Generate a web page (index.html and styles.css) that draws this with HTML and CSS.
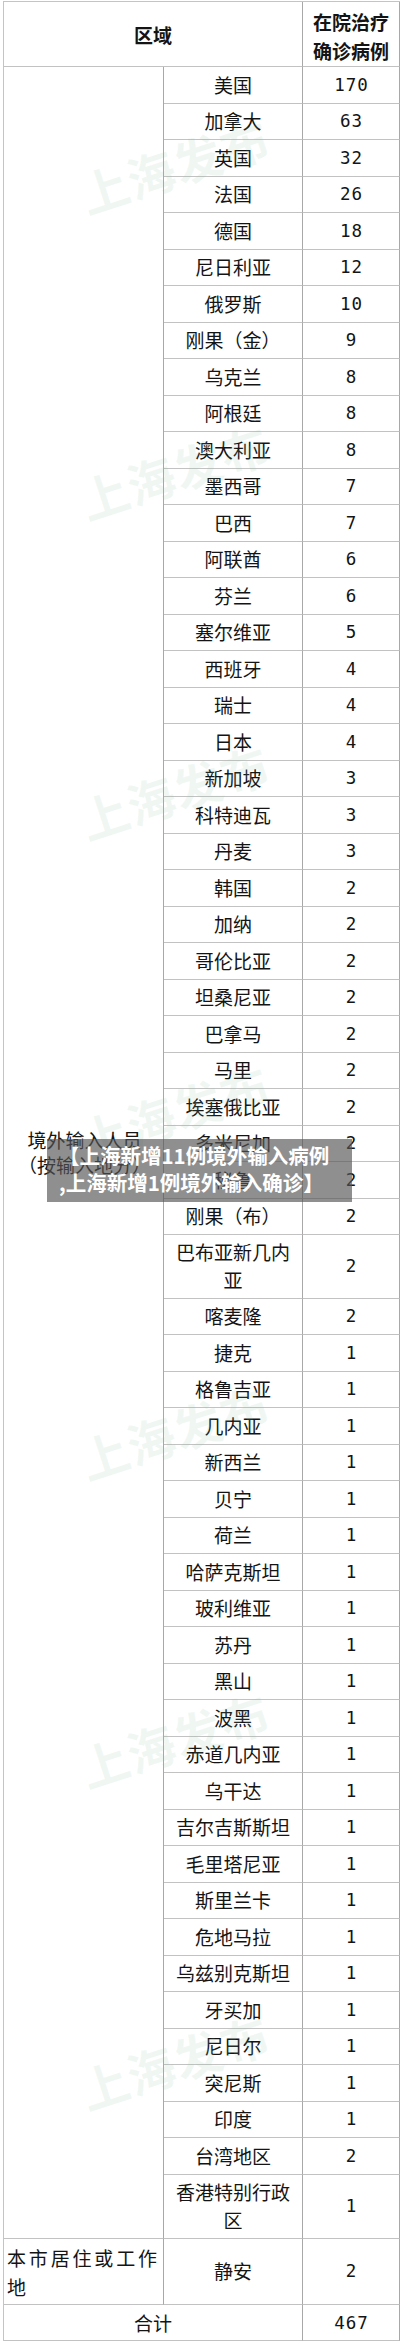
FILE: index.html
```html
<!DOCTYPE html>
<html lang="zh-CN">
<head>
<meta charset="utf-8">
<title>在院治疗确诊病例</title>
<link rel="stylesheet" href="styles.css">
</head>
<body>
<div class="page">
  <div class="sheet">
    <div class="cell head span2">区域</div>
    <div class="cell head num-head"><div>在院治疗<br>确诊病例</div></div>

    <div class="cell group"><div>境外输入人员<br><span class="halt">（按输入地分）</span></div></div>

    <div class="cell name">美国</div><div class="cell num">170</div>
    <div class="cell name">加拿大</div><div class="cell num">63</div>
    <div class="cell name">英国</div><div class="cell num">32</div>
    <div class="cell name">法国</div><div class="cell num">26</div>
    <div class="cell name">德国</div><div class="cell num">18</div>
    <div class="cell name">尼日利亚</div><div class="cell num">12</div>
    <div class="cell name">俄罗斯</div><div class="cell num">10</div>
    <div class="cell name">刚果（金）</div><div class="cell num">9</div>
    <div class="cell name">乌克兰</div><div class="cell num">8</div>
    <div class="cell name">阿根廷</div><div class="cell num">8</div>
    <div class="cell name">澳大利亚</div><div class="cell num">8</div>
    <div class="cell name">墨西哥</div><div class="cell num">7</div>
    <div class="cell name">巴西</div><div class="cell num">7</div>
    <div class="cell name">阿联酋</div><div class="cell num">6</div>
    <div class="cell name">芬兰</div><div class="cell num">6</div>
    <div class="cell name">塞尔维亚</div><div class="cell num">5</div>
    <div class="cell name">西班牙</div><div class="cell num">4</div>
    <div class="cell name">瑞士</div><div class="cell num">4</div>
    <div class="cell name">日本</div><div class="cell num">4</div>
    <div class="cell name">新加坡</div><div class="cell num">3</div>
    <div class="cell name">科特迪瓦</div><div class="cell num">3</div>
    <div class="cell name">丹麦</div><div class="cell num">3</div>
    <div class="cell name">韩国</div><div class="cell num">2</div>
    <div class="cell name">加纳</div><div class="cell num">2</div>
    <div class="cell name">哥伦比亚</div><div class="cell num">2</div>
    <div class="cell name">坦桑尼亚</div><div class="cell num">2</div>
    <div class="cell name">巴拿马</div><div class="cell num">2</div>
    <div class="cell name">马里</div><div class="cell num">2</div>
    <div class="cell name">埃塞俄比亚</div><div class="cell num">2</div>
    <div class="cell name">多米尼加</div><div class="cell num">2</div>
    <div class="cell name">秘鲁</div><div class="cell num">2</div>
    <div class="cell name">刚果（布）</div><div class="cell num">2</div>
    <div class="cell name tall"><div>巴布亚新几内<br>亚</div></div><div class="cell num tall">2</div>
    <div class="cell name">喀麦隆</div><div class="cell num">2</div>
    <div class="cell name">捷克</div><div class="cell num">1</div>
    <div class="cell name">格鲁吉亚</div><div class="cell num">1</div>
    <div class="cell name">几内亚</div><div class="cell num">1</div>
    <div class="cell name">新西兰</div><div class="cell num">1</div>
    <div class="cell name">贝宁</div><div class="cell num">1</div>
    <div class="cell name">荷兰</div><div class="cell num">1</div>
    <div class="cell name">哈萨克斯坦</div><div class="cell num">1</div>
    <div class="cell name">玻利维亚</div><div class="cell num">1</div>
    <div class="cell name">苏丹</div><div class="cell num">1</div>
    <div class="cell name">黑山</div><div class="cell num">1</div>
    <div class="cell name">波黑</div><div class="cell num">1</div>
    <div class="cell name">赤道几内亚</div><div class="cell num">1</div>
    <div class="cell name">乌干达</div><div class="cell num">1</div>
    <div class="cell name">吉尔吉斯斯坦</div><div class="cell num">1</div>
    <div class="cell name">毛里塔尼亚</div><div class="cell num">1</div>
    <div class="cell name">斯里兰卡</div><div class="cell num">1</div>
    <div class="cell name">危地马拉</div><div class="cell num">1</div>
    <div class="cell name">乌兹别克斯坦</div><div class="cell num">1</div>
    <div class="cell name">牙买加</div><div class="cell num">1</div>
    <div class="cell name">尼日尔</div><div class="cell num">1</div>
    <div class="cell name">突尼斯</div><div class="cell num">1</div>
    <div class="cell name">印度</div><div class="cell num">1</div>
    <div class="cell name">台湾地区</div><div class="cell num">2</div>
    <div class="cell name tall hk"><div>香港特别行政<br>区</div></div><div class="cell num tall hk">1</div>

    <div class="cell local">本市居住或工作地</div>
    <div class="cell name local-row">静安</div><div class="cell num local-row">2</div>

    <div class="cell span2 total">合计</div><div class="cell num total">467</div>
  </div>

  <div class="watermark wm1">上海发布</div>
  <div class="watermark wm2">上海发布</div>
  <div class="watermark wm3">上海发布</div>
  <div class="watermark wm4">上海发布</div>
  <div class="watermark wm5">上海发布</div>
  <div class="watermark wm6">上海发布</div>
  <div class="watermark wm7">上海发布</div>

  <div class="caption">
    <span class="cap-line">【上海新增11例境外输入病例</span>
    <span class="cap-line">,上海新增1例境外输入确诊】</span>
  </div>
</div>
</body>
</html>
```

FILE: styles.css
```css
html, body {
  margin: 0;
  padding: 0;
  background: #ffffff;
}

.page {
  position: relative;
  width: 401px;
  height: 2342px;
  overflow: hidden;
  font-family: "Noto Sans CJK SC", "Noto Sans", sans-serif;
  color: #141414;
}

.sheet {
  display: grid;
  grid-template-columns: 160px 139px 97px;
  margin: 1px 0 0 3px;
  width: 397px;
  box-sizing: border-box;
  border-top: 1px solid #c4c4c4;
  border-left: 1px solid #c4c4c4;
}

.cell {
  box-sizing: border-box;
  border-right: 1px solid #a8a8a8;
  border-bottom: 1px solid #c2c2c2;
  display: flex;
  align-items: center;
  justify-content: center;
  text-align: center;
  font-size: 19px;
  line-height: 28px;
  height: 36.5px;
}

.head {
  height: 65px;
  font-weight: 700;
  line-height: 29px;
}

.span2 {
  grid-column: span 2;
}

.num-head {
  padding-top: 3px;
}

.group {
  grid-row: span 58;
  height: auto;
  line-height: 25px;
  padding-left: 2px;
}

.halt {
  font-feature-settings: "halt" 1;
}

.num {
  font-family: "DejaVu Sans Mono", "Liberation Mono", monospace;
  font-size: 17.5px;
  letter-spacing: 1px;
  padding-left: 1px;
}

.tall {
  height: 63.5px;
}

.hk {
  height: 64px;
}

.local {
  height: 66.5px;
  display: block;
  text-align: justify;
  padding: 4px 6px 0 3px;
  line-height: 29px;
}

.local-row {
  height: 66.5px;
}

.total {
  height: 36px;
}

.watermark {
  position: absolute;
  left: 76px;
  width: 200px;
  font-size: 48px;
  line-height: 52px;
  font-weight: 700;
  letter-spacing: 1px;
  white-space: nowrap;
  color: rgba(140, 195, 165, 0.13);
  transform: rotate(-18deg);
  pointer-events: none;
}

.wm1 { top: 138px; }
.wm2 { top: 444px; }
.wm3 { top: 764px; }
.wm4 { top: 1084px; }
.wm5 { top: 1404px; }
.wm6 { top: 1712px; }
.wm7 { top: 2034px; }

.caption {
  position: absolute;
  left: 47px;
  top: 1139px;
  width: 305px;
  height: 63px;
  box-sizing: border-box;
  padding: 3px 0 0 12px;
  background: rgba(85, 85, 85, 0.66);
  color: #ffffff;
  font-weight: 700;
  font-size: 20.5px;
  line-height: 27px;
  white-space: nowrap;
}

.cap-line {
  display: block;
}
```
